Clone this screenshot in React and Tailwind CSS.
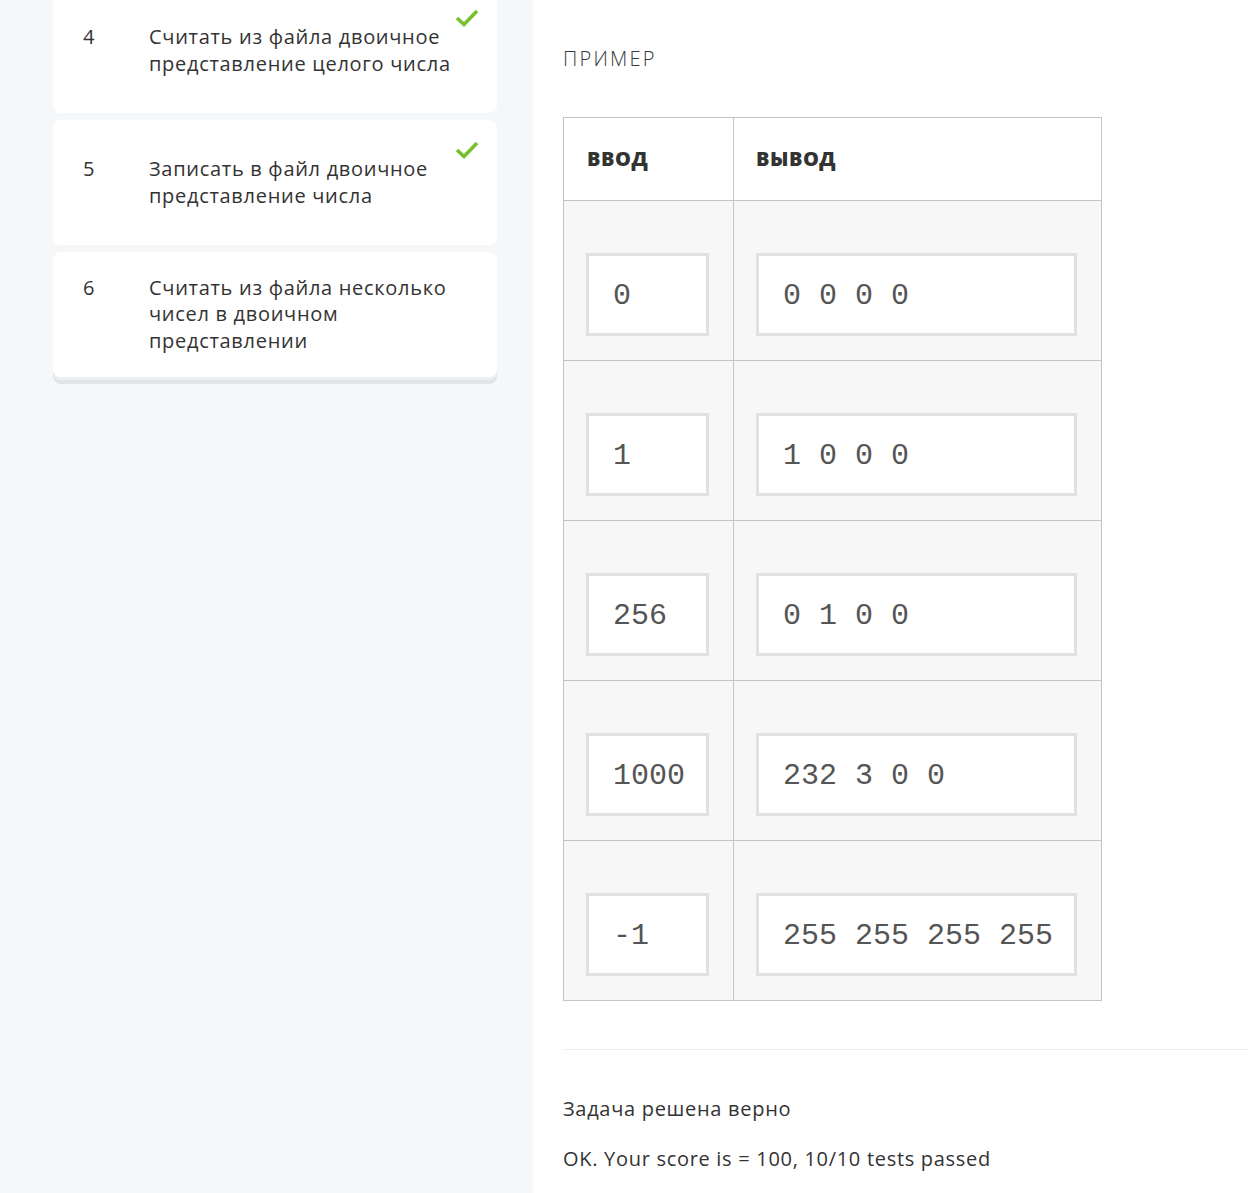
import React from "react";

const tasks = [
  { n: 4, title: "Считать из файла двоичное представление целого числа", done: true },
  { n: 5, title: "Записать в файл двоичное представление числа", done: true },
  { n: 6, title: "Считать из файла несколько чисел в двоичном представлении", done: false },
];

const rows = [
  ["0", "0 0 0 0"],
  ["1", "1 0 0 0"],
  ["256", "0 1 0 0"],
  ["1000", "232 3 0 0"],
  ["-1", "255 255 255 255"],
];

const Check = () => (
  <svg width="24" height="20" viewBox="0 0 24 20" className="absolute right-[18px] top-[20px]">
    <path d="M2 10 L9 16.5 L22 3" fill="none" stroke="#77c02f" strokeWidth="3.6" />
  </svg>
);

const App = () => {
  return (
    <div
      className="flex min-h-[1193px] w-[1248px] overflow-hidden bg-white text-[#333]"
      style={{ fontFamily: '"Open Sans", "Noto Sans", sans-serif' }}
    >
      {/* Sidebar */}
      <div className="w-[533px] shrink-0 bg-[#f6f7f9] pl-[53px] pr-[36px]">
        <div className="-mt-[12px] rounded-b-[8px] shadow-[0_3px_0_#eff0f2,0_7px_0_#e3e4e6]">
          {tasks.map((t, i) => (
            <div
              key={t.n}
              className={`relative flex min-h-[125px] items-center rounded-[8px] bg-white pl-[30px] ${
                i < tasks.length - 1 ? "mb-[7px]" : ""
              }`}
            >
              <div className="flex items-start text-[20px] leading-[26.5px] tracking-[0.7px]">
                <div className="w-[66px] shrink-0">{t.n}</div>
                <div className="w-[318px]">{t.title}</div>
              </div>
              {t.done && <Check />}
            </div>
          ))}
        </div>
      </div>

      {/* Content */}
      <div className="flex-1 pl-[30px] pt-[47px]">
        <div className="text-[20px] font-light leading-[24px] tracking-[2.2px] text-[#3a3a3a]">
          ПРИМЕР
        </div>

        <table className="mt-[46px] w-[539px] border-collapse">
          <thead>
            <tr className="h-[83px] bg-white">
              <th className="w-[170px] border border-[#c4c4c4] pl-[23px] text-left text-[20px] font-extrabold uppercase tracking-[0.5px] text-[#333]">
                Ввод
              </th>
              <th className="border border-[#c4c4c4] pl-[22px] text-left text-[20px] font-extrabold uppercase tracking-[0.5px] text-[#333]">
                Вывод
              </th>
            </tr>
          </thead>
          <tbody>
            {rows.map(([inp, out]) => (
              <tr key={inp} className="bg-[#f7f7f7]">
                <td className="h-[160px] border border-[#c4c4c4] px-[22px] pb-[23px] pt-[52px] align-top">
                  <div
                    className="flex h-[83px] w-[123px] items-center border-[3px] border-[#e1e1e1] bg-white pl-[24px] pt-[3px] text-[30px] text-[#555]"
                    style={{ fontFamily: '"Liberation Mono", monospace' }}
                  >
                    <span className="whitespace-pre">{inp}</span>
                  </div>
                </td>
                <td className="border border-[#c4c4c4] px-[22px] pb-[23px] pt-[52px] align-top">
                  <div
                    className="flex h-[83px] w-[321px] items-center border-[3px] border-[#e1e1e1] bg-white pl-[24px] pt-[3px] text-[30px] text-[#555]"
                    style={{ fontFamily: '"Liberation Mono", monospace' }}
                  >
                    <span className="whitespace-pre">{out}</span>
                  </div>
                </td>
              </tr>
            ))}
          </tbody>
        </table>

        <div className="mt-[48px] border-t border-[#eeeeee]" />

        <div className="mt-[46px] text-[20px] leading-[26px] tracking-[0.7px]">Задача решена верно</div>
        <div className="mt-[24px] text-[20px] leading-[26px] tracking-[0.7px]">
          OK. Your score is = 100, 10/10 tests passed
        </div>
      </div>
    </div>
  );
};

export default App;
